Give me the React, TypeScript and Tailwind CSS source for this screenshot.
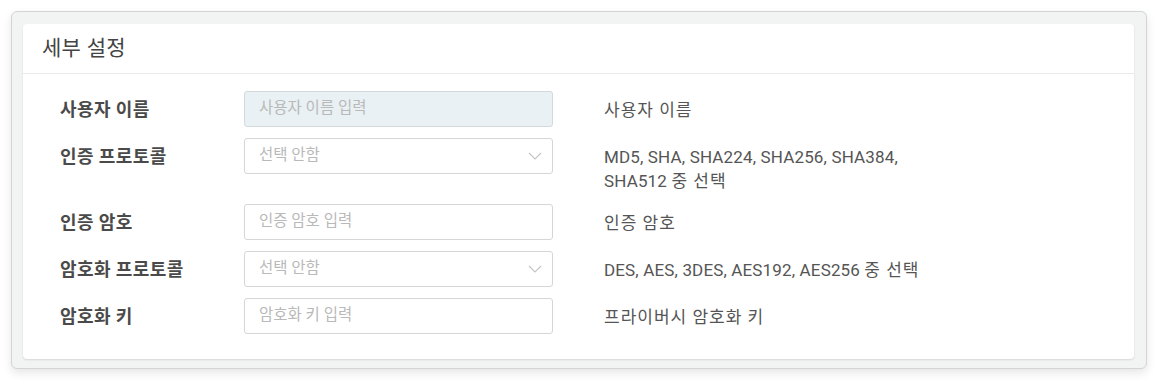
import React from "react";

const font = { fontFamily: 'Roboto, "Noto Sans CJK KR", sans-serif' };

function Chevron() {
  return (
    <svg width="14" height="8" viewBox="0 0 14 8" className="absolute right-[10px] top-1/2 -translate-y-1/2">
      <path d="M1 1 L7 7 L13 1" fill="none" stroke="#c4c4c4" strokeWidth="1.1" />
    </svg>
  );
}

function Mixed({ text }: { text: string }) {
  const parts = text.split(/([\uAC00-\uD7A3]+(?:\s[\uAC00-\uD7A3]+)*)/).filter((p) => p.length > 0);
  return (
    <>
      {parts.map((p, i) =>
        /[\uAC00-\uD7A3]/.test(p) ? (
          <span key={i} className="tracking-[1px]">{p}</span>
        ) : (
          <span key={i}>{p}</span>
        )
      )}
    </>
  );
}

type Row = { label: string; kind: "input" | "select" | "inputFilled"; placeholder: string; desc: string[] };

const rows: Row[] = [
  { label: "사용자 이름", kind: "inputFilled", placeholder: "사용자 이름 입력", desc: ["사용자 이름"] },
  { label: "인증 프로토콜", kind: "select", placeholder: "선택 안함", desc: ["MD5, SHA, SHA224, SHA256, SHA384,", "SHA512 중 선택"] },
  { label: "인증 암호", kind: "input", placeholder: "인증 암호 입력", desc: ["인증 암호"] },
  { label: "암호화 프로토콜", kind: "select", placeholder: "선택 안함", desc: ["DES, AES, 3DES, AES192, AES256 중 선택"] },
  { label: "암호화 키", kind: "input", placeholder: "암호화 키 입력", desc: ["프라이버시 암호화 키"] },
];

export default function App() {
  return (
    <div className="w-[1169px] h-[391px] bg-white pt-[11px] pl-[11px]" style={font}>
      <div className="w-[1136px] h-[358px] rounded-[6px] border border-[#d3d5d5] bg-[#f2f3f3] pt-[12px] pl-[11px] pr-[11px] shadow-[0_4px_10px_rgba(0,0,0,0.10)]">
        <div className="w-[1111px] h-[335px] rounded-[4px] bg-white shadow-[0_1px_2px_rgba(0,0,0,0.12)]">
          <div className="h-[50px] border-b border-[#e8e9e9] pl-[19px] flex items-center">
            <span className="text-[21px] text-[#444] tracking-[0.3px]">세부 설정</span>
          </div>
          <div className="pt-[17px] pl-[37px] flex flex-col gap-[11px]">
            {rows.map((r) => (
              <div key={r.label} className="flex items-start">
                <div className="w-[184px] pt-[7px] leading-[24px] text-[18px] tracking-[0.4px] font-bold text-[#4a4a4a]">{r.label}</div>
                <div
                  className={
                    "relative w-[309px] h-[36px] rounded-[3px] border flex items-center pl-[14px] text-[15.5px] text-[#b9b9b9] " +
                    (r.kind === "inputFilled" ? "bg-[#e9f1f4] border-[#d3d9dc]" : "bg-white border-[#d6d6d6]")
                  }
                >
                  {r.placeholder}
                  {r.kind === "select" && <Chevron />}
                </div>
                <div className="ml-[51px] w-[340px] pt-[7px] leading-[24px] text-[17px] tracking-[0.15px] text-[#555]">
                  {r.desc.map((line) => (
                    <div key={line} className="whitespace-nowrap">
                      <Mixed text={line} />
                    </div>
                  ))}
                </div>
              </div>
            ))}
          </div>
        </div>
      </div>
    </div>
  );
}
